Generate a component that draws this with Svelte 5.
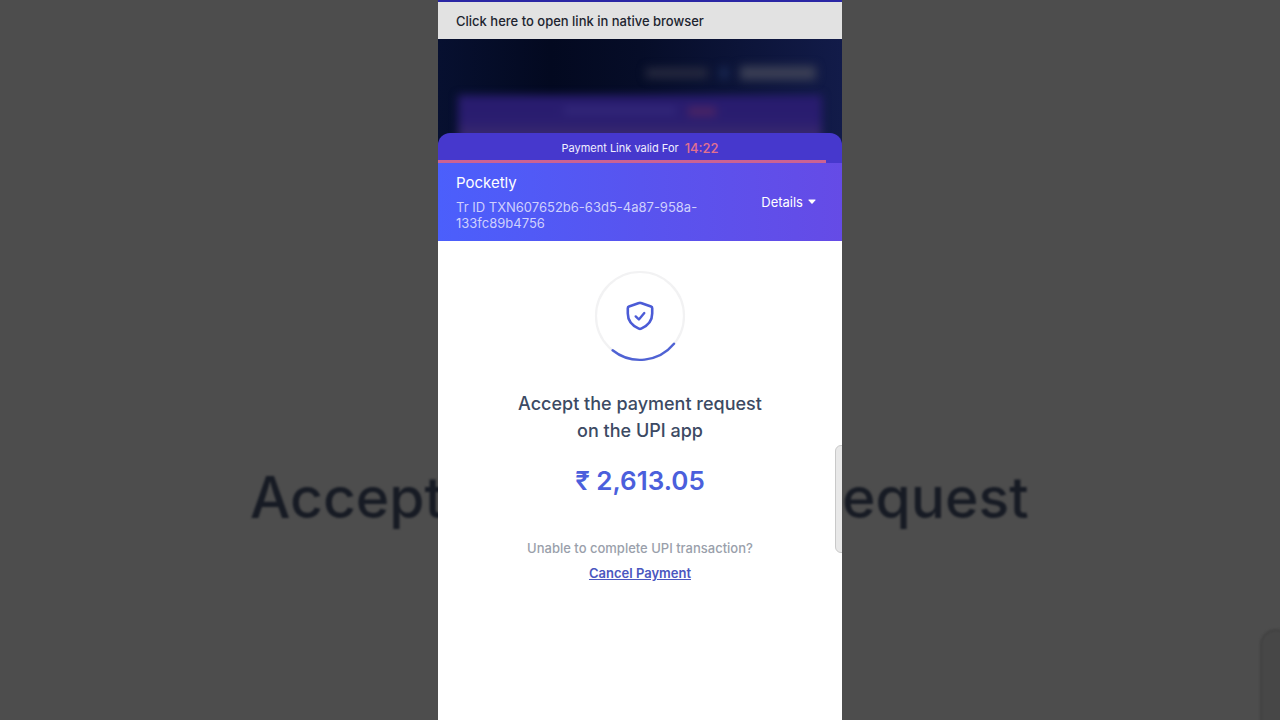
<script lang="ts">
  const merchant = 'Pocketly';
  const transactionId = 'TXN607652b6-63d5-4a87-958a-133fc89b4756';
  const amount = '₹ 2,613.05';
  const timeLeft = '14:22';
  const progress = 96;

  let showDetails = false;

  function toggleDetails() {
    showDetails = !showDetails;
  }
</script>

<div class="stage">
  <!-- Dimmed backdrop, left of the phone -->
  <div class="side left" aria-hidden="true">
    <span class="side-title">Accept</span>
  </div>

  <main class="phone">
    <div class="status-strip"></div>
    <button class="native-bar">Click here to open link in native browser</button>

    <!-- Checkout page under the sheet -->
    <div class="page-behind" aria-hidden="true">
      <div class="powered">
        <span class="powered-by"></span>
        <span class="powered-icon"></span>
        <span class="powered-logo"></span>
      </div>
      <div class="card-behind">
        <span class="card-text"></span>
        <span class="card-time"></span>
      </div>
    </div>

    <section class="sheet">
      <div class="timer">
        <span>Payment Link valid For</span>
        <strong>{timeLeft}</strong>
      </div>
      <div class="track">
        <div class="track-fill" style="width: {progress}%"></div>
      </div>

      <header class="merchant">
        <div class="merchant-info">
          <h1>{merchant}</h1>
          <p>Tr ID {transactionId}</p>
        </div>
        <button class="details" aria-expanded={showDetails} on:click={toggleDetails}>
          Details
          <svg width="8" height="5" viewBox="0 0 8 5">
            <path d="M1 .5h6q1 0 .4.8L4.6 4.4q-.6.6-1.2 0L.6 1.3Q0 .5 1 .5z" fill="currentColor" />
          </svg>
        </button>
      </header>

      <div class="content">
        <svg class="spinner" width="92" height="92" viewBox="0 0 92 92" fill="none">
          <circle cx="46" cy="46" r="44" stroke="#f2f2f3" stroke-width="2.2" />
          <path d="M18.6 80.2A44 44 0 0 0 80 73.8" stroke="#4f62d4" stroke-width="2.4" stroke-linecap="round" />
          <path
            d="M45 33.1Q46 32.7 47 33.1L57 36.6Q58.2 37 58.2 38.3V43.5C58.2 50.5 53.5 55.8 47.2 58.6Q46 59.1 44.800 58.600C38.500 55.800 33.800 50.500 33.800 43.500V38.300Q33.800 37 35 36.600Z"
            stroke="#4b5bd6"
            stroke-width="2.6"
            stroke-linejoin="round"
          />
          <path d="M41.7 46.400L44.900 49.500L50.300 43.100" stroke="#4b5bd6" stroke-width="2.4" stroke-linecap="round" stroke-linejoin="round" />
        </svg>

        <h2>Accept the payment request on the UPI app</h2>
        <p class="amount">{amount}</p>
        <p class="help">Unable to complete UPI transaction?</p>
        <a class="cancel" href="#cancel">Cancel Payment</a>
      </div>
    </section>

    <div class="edge-handle"></div>
  </main>

  <!-- Dimmed backdrop, right of the phone -->
  <div class="side right" aria-hidden="true">
    <span class="side-title">equest</span>
    <div class="side-handle"></div>
  </div>
</div>

<style>
  :global(body) {
    margin: 0;
    background: #4d4d4d;
  }

  .stage {
    display: flex;
    justify-content: center;
    min-height: 100vh;
    font-family: Inter, 'Noto Sans', sans-serif;
  }

  .side {
    position: relative;
    flex: 1;
    display: flex;
    align-items: flex-start;
    min-width: 0;
    padding-top: 465px;
    overflow: hidden;
  }

  .left {
    justify-content: flex-end;
  }

  .left .side-title {
    margin-right: -6px;
  }

  .side-title {
    font-size: 57px;
    line-height: 66px;
    font-weight: 500;
    color: #171b24;
    filter: blur(1px);
  }

  .side-handle {
    position: absolute;
    top: 629px;
    right: -12px;
    bottom: -20px;
    width: 28px;
    border: 2px solid #414141;
    border-radius: 18px;
    background: #474747;
    filter: blur(1px);
  }

  .phone {
    position: relative;
    display: flex;
    flex-direction: column;
    width: 100%;
    max-width: 404px;
    overflow: hidden;
    background: #060b26;
  }

  .status-strip {
    height: 2px;
    background: #2a27a5;
  }

  .native-bar {
    padding: 10px 18px 9px;
    border: none;
    background: #e2e2e2;
    color: #20242f;
    font-family: inherit;
    font-size: 13px;
    line-height: 18px;
    font-weight: 500;
    text-align: left;
    cursor: pointer;
  }

  .page-behind {
    display: flex;
    flex-direction: column;
    gap: 12px;
    height: 106px;
    padding: 24px 20px 0;
    margin-bottom: -12px;
    box-sizing: border-box;
    overflow: hidden;
    background: linear-gradient(90deg, #071030 0%, #030920 28%, #060d28 50%, #121b49 100%);
  }

  .powered {
    display: flex;
    justify-content: flex-end;
    align-items: center;
    gap: 12px;
    height: 20px;
    padding-right: 6px;
    filter: blur(5px);
  }

  .powered-by {
    width: 62px;
    height: 10px;
    background: #272a3f;
  }

  .powered-icon {
    width: 8px;
    height: 12px;
    background: #1b2b55;
  }

  .powered-logo {
    width: 76px;
    height: 14px;
    background: #3b3f55;
  }

  .card-behind {
    flex: 1;
    display: flex;
    justify-content: center;
    gap: 12px;
    padding-top: 12px;
    background: linear-gradient(#281c6e 0%, #2a1d70 50%, #39296e 80%);
    filter: blur(4px);
  }

  .card-text {
    width: 112px;
    height: 7px;
    background: #33287a;
  }

  .card-time {
    width: 28px;
    height: 9px;
    background: #4b2464;
  }

  .sheet {
    position: relative;
    flex: 1;
    display: flex;
    flex-direction: column;
    border-radius: 12px 12px 0 0;
    overflow: hidden;
  }

  .timer {
    display: flex;
    justify-content: center;
    align-items: center;
    gap: 6px;
    height: 27px;
    padding-top: 2px;
    box-sizing: border-box;
    background: #4638cd;
    color: #f1efff;
    font-size: 11px;
  }

  .timer strong {
    color: #e2718f;
    font-size: 13px;
    font-weight: 500;
  }

  .track {
    height: 3px;
    background: #4638cd;
  }

  .track-fill {
    height: 100%;
    background: #cb6293;
  }

  .merchant {
    display: flex;
    justify-content: space-between;
    align-items: center;
    gap: 24px;
    padding: 9px 26px 10px 18px;
    background: linear-gradient(90deg, #4b5ffc 0%, #5854ef 50%, #654be6 100%);
    color: #fff;
  }

  .merchant-info {
    flex: 1;
    max-width: 256px;
  }

  .merchant h1 {
    margin: 0 0 6px;
    font-size: 15px;
    line-height: 21px;
    font-weight: 400;
  }

  .merchant p {
    margin: 0;
    color: #cfd0fd;
    font-size: 13px;
    line-height: 16px;
  }

  .details {
    display: flex;
    align-items: center;
    gap: 5px;
    padding: 0;
    border: none;
    background: none;
    color: #fff;
    font-family: inherit;
    font-size: 13px;
    line-height: 16px;
    cursor: pointer;
  }

  .content {
    flex: 1;
    display: flex;
    flex-direction: column;
    align-items: center;
    padding: 29px 24px;
    background: #fff;
    text-align: center;
  }

  h2 {
    max-width: 270px;
    margin: 28px 0 0;
    color: #3c4a63;
    font-size: 18px;
    line-height: 27px;
    font-weight: 500;
  }

  .amount {
    margin: 19px 0 0;
    color: #4b5fdc;
    font-size: 26px;
    line-height: 36px;
    font-weight: 600;
  }

  .help {
    margin: 39px 0 0;
    color: #9a9fab;
    font-size: 13px;
    line-height: 20px;
    font-weight: 500;
  }

  .cancel {
    margin-top: 5px;
    color: #4b57c0;
    font-size: 13px;
    line-height: 20px;
    font-weight: 600;
  }

  .edge-handle {
    position: absolute;
    top: 445px;
    right: -9px;
    width: 14px;
    height: 106px;
    border: 1px solid #c9c9c9;
    border-radius: 6px;
    background: #e8e8e8;
  }
</style>
